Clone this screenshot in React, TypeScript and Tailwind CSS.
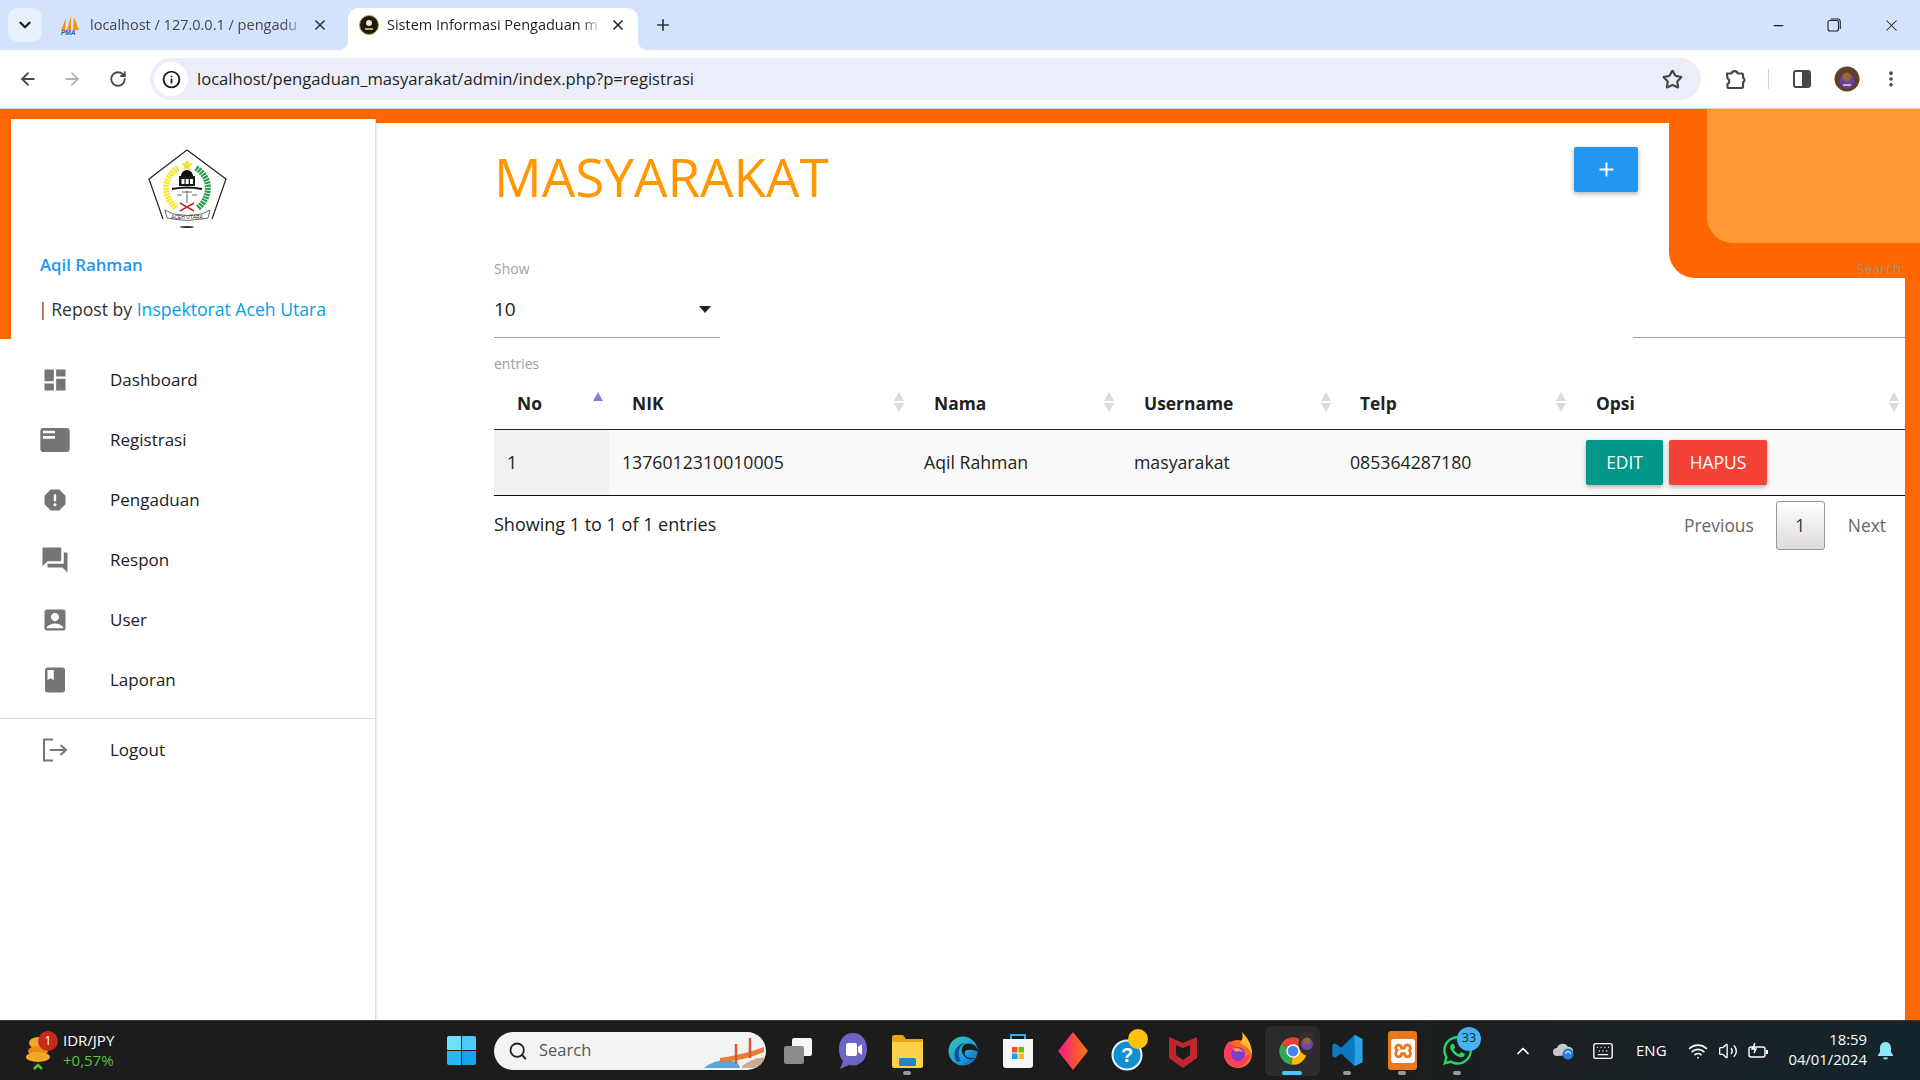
import React from "react";
import { MdDashboard, MdFeaturedPlayList, MdReport, MdForum, MdAccountBox, MdBook } from "react-icons/md";
import { SiXampp } from "react-icons/si";
import { FaWhatsapp } from "react-icons/fa";
import { ArrowLeft, ArrowRight, RotateCw, Star, X, Plus, ChevronDown, ChevronUp, Minus, Info, MoreVertical, Search, Wifi, Volume2, Keyboard } from "lucide-react";

const LogoutIcon = () => (
  <svg width="26" height="24" viewBox="0 0 26 24" fill="none" stroke="#757575" strokeWidth="2">
    <path d="M11 1.5H2v21h9" />
    <path d="M8 12h16M18.5 7l5.5 5-5.5 5" />
  </svg>
);

const menu = [
  { label: "Dashboard", icon: <MdDashboard size={28} color="#757575" /> },
  { label: "Registrasi", icon: <MdFeaturedPlayList size={32} color="#757575" /> },
  { label: "Pengaduan", icon: <MdReport size={28} color="#757575" /> },
  { label: "Respon", icon: <MdForum size={30} color="#757575" /> },
  { label: "User", icon: <MdAccountBox size={28} color="#757575" /> },
  { label: "Laporan", icon: <MdBook size={30} color="#757575" /> },
];

const Logo = () => (
  <svg width="115" height="100" viewBox="0 0 115 100" className="block">
    <path d="M57 10 96 39 82 79M33 79 19 39 57 10" fill="none" stroke="#222" strokeWidth="1.2" />
    <path d="M48 28C33 37 32 56 46 68" fill="none" stroke="#f6e92a" strokeWidth="6" strokeDasharray="2.2 .8" />
    <path d="M66 28C81 37 82 56 68 68" fill="none" stroke="#2f9e4f" strokeWidth="6" strokeDasharray="2.2 .8" />
    <path d="m57 19 1.7 4.2 4.5.2-3.5 2.8 1.2 4.3-3.9-2.5-3.9 2.5 1.2-4.3-3.5-2.8 4.5-.2z" fill="#f4e12b" />
    <path d="M51 36a6 6 0 0 1 12 0z" fill="#111" />
    <rect x="49" y="36" width="16" height="10" fill="#1a1a1a" />
    <rect x="51.5" y="39" width="3" height="5" fill="#fff" />
    <rect x="55.7" y="39" width="3" height="5" fill="#fff" />
    <rect x="60" y="39" width="3" height="5" fill="#fff" />
    <path d="M42 49q15-3 30 0" stroke="#111" strokeWidth="2" fill="none" />
    <path d="M57 51v12M52 52h10M47 55h5M62 55h5" stroke="#666" strokeWidth="1" fill="none" />
    <path d="m50 71 14-8M64 71 50 63" stroke="#c22a2a" strokeWidth="1.5" />
    <path d="m35 70 8 4q14 3 29 0l8-4 -2 8-6 1q-15 3-29 0l-6-1z" fill="#fff" stroke="#444" strokeWidth=".8" />
    <text x="57" y="78.5" textAnchor="middle" fontSize="5" fill="#222" fontFamily="'Liberation Sans',sans-serif">ACEH UTARA</text>
    <ellipse cx="57" cy="87" rx="7" ry="1" fill="#333" />
  </svg>
);

const SortIcon = ({ active }: { active?: boolean }) => (
  <svg width="10" height="24" viewBox="0 0 10 24" className="block">
    <path d="M5 3 10 12H0z" fill={active ? "#7b80dd" : "#dcdcdc"} />
    {!active && <path d="M5 23 10 14H0z" fill="#dcdcdc" />}
  </svg>
);

const cols = [
  { h: "No", w: 115 },
  { h: "NIK", w: 301 },
  { h: "Nama", w: 210 },
  { h: "Username", w: 217 },
  { h: "Telp", w: 235 },
  { h: "Opsi", w: 333 },
];

const TbSlot = ({ children, dot, active }: { children: React.ReactNode; dot?: boolean; active?: boolean }) => (
  <div className={`relative flex h-[50px] w-[55px] items-center justify-center rounded-md ${active ? "bg-[#2b2b2b]" : ""}`}>
    {children}
    {dot && <span className="absolute bottom-[1px] left-[23px] h-[4px] w-[8px] rounded-full bg-[#9a9a9a]" />}
    {active && <span className="absolute bottom-[1px] left-[17px] h-[4px] w-[20px] rounded-full bg-[#4cc2ff]" />}
  </div>
);

const ChromeLogo = ({ size = 30 }: { size?: number }) => (
  <svg width={size} height={size} viewBox="0 0 24 24">
    <path d="M12 12 2.6 6.3A11 11 0 0 1 21.6 6.5z" fill="#ea4335" />
    <path d="M12 12 2.6 6.3A11 11 0 0 0 11 23z" fill="#34a853" />
    <path d="M12 12 21.6 6.5A11 11 0 0 1 11 23z" fill="#fbbc05" />
    <circle cx="12" cy="12" r="5.4" fill="#fff" />
    <circle cx="12" cy="12" r="4.3" fill="#4285f4" />
  </svg>
);

export default function App() {
  return (
    <div className="flex h-screen w-[1920px] flex-col overflow-hidden bg-white font-['Open_Sans',sans-serif] text-[#212121]">
      {/* tab strip */}
      <div className="flex h-[50px] shrink-0 items-end bg-[#d3e3fd] pl-[8px]">
        <div className="mb-[8px] flex h-[34px] w-[34px] items-center justify-center rounded-[10px] bg-[#e8f0fd]">
          <ChevronDown size={18} strokeWidth={3} color="#1f1f1f" />
        </div>
        <div className="flex h-[42px] w-[306px] items-center pb-[8px] pl-[18px]">
          <svg width="20" height="20" viewBox="0 0 20 20" className="shrink-0">
            <path d="M6 3 1 15h4zM11 1 7 15h4zM14 2l-1 13h6z" fill="#f29111" />
            <text x="1" y="20" fontSize="6.5" fontStyle="italic" fontWeight="700" fill="#34558b" fontFamily="'Liberation Sans',sans-serif">PMA</text>
          </svg>
          <span className="ml-[10px] w-[215px] overflow-hidden whitespace-nowrap text-[14.5px] text-[#474747] [mask-image:linear-gradient(90deg,#000_90%,transparent)]">localhost / 127.0.0.1 / pengadu</span>
          <X size={16} strokeWidth={2.5} color="#333" className="ml-[7px]" />
        </div>
        <div className="relative flex h-[42px] w-[290px] items-center rounded-t-[10px] bg-white pb-[8px] pl-[11px]">
          <span className="absolute bottom-0 left-[-10px] h-[10px] w-[10px] bg-[radial-gradient(circle_at_0_0,#d3e3fd_10px,#fff_10.5px)]" />
          <span className="absolute bottom-0 right-[-10px] h-[10px] w-[10px] bg-[radial-gradient(circle_at_100%_0,#d3e3fd_10px,#fff_10.5px)]" />
          <svg width="20" height="20" viewBox="0 0 20 20" className="shrink-0">
            <circle cx="10" cy="10" r="9.5" fill="#1d1a12" stroke="#b89a4a" />
            <circle cx="10" cy="8" r="3" fill="#e8e4d4" />
            <rect x="6" y="13" width="8" height="2" fill="#c8a94e" />
          </svg>
          <span className="ml-[8px] w-[215px] overflow-hidden whitespace-nowrap text-[14.5px] text-[#1f1f1f] [mask-image:linear-gradient(90deg,#000_90%,transparent)]">Sistem Informasi Pengaduan m</span>
          <X size={16} strokeWidth={2.5} color="#222" className="ml-[8px]" />
        </div>
        <div className="mb-[8px] ml-[16px] flex h-[34px] w-[18px] items-center justify-center">
          <Plus size={18} strokeWidth={2.2} color="#333" />
        </div>
        <div className="ml-auto flex h-full items-center">
          <div className="flex w-[56px] justify-center"><Minus size={15} color="#222" /></div>
          <div className="flex w-[56px] justify-center">
            <svg width="14" height="14" viewBox="0 0 14 14" fill="none" stroke="#222" strokeWidth="1.1">
              <rect x="1" y="2.5" width="10.5" height="10.5" rx="2" />
              <path d="M3.5 1h7a3 3 0 0 1 2.8 3v7" />
            </svg>
          </div>
          <div className="flex w-[58px] justify-center"><X size={19} strokeWidth={1.3} color="#222" /></div>
        </div>
      </div>

      {/* toolbar */}
      <div className="flex h-[59px] shrink-0 items-center rounded-t-[10px] border-b border-[#d4d4d4] bg-white pl-[18px]">
        <ArrowLeft size={20} strokeWidth={2.2} color="#474747" />
        <ArrowRight size={20} strokeWidth={2.2} color="#b4b4b4" className="ml-[24px]" />
        <RotateCw size={18} strokeWidth={2.4} color="#474747" className="ml-[27px]" />
        <div className="ml-[23px] flex h-[42px] w-[1551px] items-center rounded-full bg-[#ebeef8] pl-[4px]">
          <div className="flex h-[34px] w-[34px] items-center justify-center rounded-full bg-white">
            <Info size={19} strokeWidth={2.4} color="#1f1f1f" />
          </div>
          <span className="ml-[9px] text-[16.6px] text-[#1f1f1f]">localhost/pengaduan_masyarakat/admin/index.php?p=registrasi</span>
          <Star size={21} strokeWidth={2.5} color="#474747" className="ml-auto mr-[18px]" />
        </div>
        <svg width="23" height="23" viewBox="0 0 23 23" fill="none" stroke="#474747" strokeWidth="2.2" strokeLinejoin="round" className="ml-[23px]">
          <path d="M3 5.500h4.500a3.200 3.200 0 0 1 6.200 0H18a1 1 0 0 1 1 1v3.300a2.400 2.400 0 0 1 0 4.400V19a1 1 0 0 1-1 1H4.500a1 1 0 0 1-1-1v-3a3 3 0 0 0 0-5.500z" />
        </svg>
        <span className="ml-[21px] h-[20px] w-[1px] bg-[#c4d5f3]" />
        <div className="ml-[24px] flex h-[18px] w-[18px] overflow-hidden rounded-[3px] border-2 border-[#474747]">
          <span className="w-1/2" />
          <span className="w-1/2 bg-[#474747]" />
        </div>
        <svg width="26" height="26" viewBox="0 0 26 26" className="ml-[23px]">
          <circle cx="13" cy="13" r="12.5" fill="#5d3f2a" />
          <circle cx="13" cy="15" r="7.5" fill="#6b3fa8" />
          <circle cx="13" cy="11" r="4.5" fill="#94683e" />
          <path d="M9 19h8" stroke="#ddd" strokeWidth="1.5" />
        </svg>
        <MoreVertical size={20} strokeWidth={2.4} color="#474747" className="ml-[21px]" />
      </div>

      {/* page */}
      <div className="relative flex min-h-0 flex-1 bg-white">
        <div className="absolute left-0 top-0 h-[14px] w-full bg-[#ff6600]" />
        <div className="absolute left-0 top-0 z-20 h-[230px] w-[11px] bg-[#ff6600]" />
        <div className="absolute right-0 top-0 h-[169px] w-[251px] rounded-bl-[26px] bg-[#ff6600]" />
        <div className="absolute right-0 top-0 h-[134px] w-[213px] rounded-bl-[26px] bg-[#ff9933]" />
        <div className="absolute bottom-0 right-0 top-[169px] w-[15px] bg-[#ff6600]" />

        <aside className="relative z-10 mt-[10px] flex w-[376px] shrink-0 flex-col border-r border-[#e0e0e0] bg-white shadow-[1px_0_3px_rgba(0,0,0,0.1)]">
          <div className="mt-[21px] flex justify-center"><Logo /></div>
          <div className="ml-[40px] mt-[13px] text-[16.8px] font-semibold leading-[24px] text-[#2196f3]">Aqil Rahman</div>
          <div className="ml-[40px] mt-[20px] flex text-[17.6px] leading-[24px] text-[#333]">
            <span className="ml-[-2px] mr-[-2px] text-[#444]">|</span>
            <span className="ml-[1px] whitespace-pre"> Repost by <span className="text-[#03a0ec]">Inspektorat Aceh Utara</span></span>
          </div>
          <nav className="mt-[29px]">
            {menu.map((m) => (
              <div key={m.label} className="flex h-[60px] items-center">
                <div className="flex w-[110px] justify-center"><span className="flex w-[32px] justify-center">{m.icon}</span></div>
                <span className="text-[17px]">{m.label}</span>
              </div>
            ))}
          </nav>
          <div className="mt-[8px] border-t border-[#e0e0e0] pt-[1px]">
            <div className="flex h-[60px] items-center">
              <div className="flex w-[110px] justify-center"><LogoutIcon /></div>
              <span className="text-[17px]">Logout</span>
            </div>
          </div>
        </aside>

        <main className="relative z-10 min-w-0 flex-1 pl-[118px] pr-[15px]">
          <div className="flex h-[150px] items-start justify-between pr-[267px] pt-[38px]">
            <h1 className="-mt-[2px] text-[53px] font-normal leading-[64px] text-[#ff9800]">MASYARAKAT</h1>
            <button className="flex h-[45px] w-[64px] items-center justify-center rounded-[2px] bg-[#2196f3] shadow-[0_2px_5px_rgba(0,0,0,0.3)]">
              <Plus size={21} strokeWidth={2.2} color="#fff" />
            </button>
          </div>

          <div className="flex items-start justify-between">
            <div>
              <div className="text-[14px] leading-[20px] text-[#9e9e9e]">Show</div>
              <div className="mt-[13px] flex h-[46px] w-[226px] items-center justify-between border-b border-[#9e9e9e] pb-[10px] pr-[9px]">
                <span className="text-[19px]">10</span>
                <span className="h-0 w-0 border-x-[6px] border-t-[7px] border-x-transparent border-t-[#212121]" />
              </div>
            </div>
            <div className="flex w-[272px] flex-col items-end">
              <div className="text-[14px] leading-[20px] text-[#a8927c]">Search:</div>
              <div className="mt-[13px] h-[46px] w-full border-b border-[#9e9e9e]" />
            </div>
          </div>

          <div className="mt-[16px] text-[14px] leading-[20px] text-[#9e9e9e]">entries</div>

          <table className="w-[1411px] table-fixed border-collapse">
            <colgroup>
              {cols.map((c) => <col key={c.h} style={{ width: c.w }} />)}
            </colgroup>
            <thead>
              <tr className="h-[55px] border-b border-[#222]">
                {cols.map((c, i) => (
                  <th key={c.h} className="relative pl-[23px] pt-[3px] text-left align-middle text-[17.4px] font-bold text-[#212121]">
                    <span className={i === 2 || i === 3 || i === 5 ? "ml-[1px]" : ""}>{c.h}</span>
                    <span className="absolute right-[6px] top-[15px]"><SortIcon active={i === 0} /></span>
                  </th>
                ))}
              </tr>
            </thead>
            <tbody>
              <tr className="h-[66px] border-b border-[#111] bg-[#f9f9f9] text-[17.7px]">
                <td className="bg-[#f1f1f1] pl-[13px] pt-[1px]">1</td>
                <td className="pl-[13px] pt-[1px]">1376012310010005</td>
                <td className="pl-[14px] pt-[1px]">Aqil Rahman</td>
                <td className="pl-[14px] pt-[1px]">masyarakat</td>
                <td className="pl-[13px] pt-[1px]">085364287180</td>
                <td className="pl-[14px]">
                  <div className="flex gap-[6px]">
                    <button className="h-[45px] w-[77px] rounded-[2px] bg-[#009688] text-[17.4px] text-white shadow-[0_2px_4px_rgba(0,0,0,0.3)]">EDIT</button>
                    <button className="h-[45px] w-[98px] rounded-[2px] bg-[#f44336] text-[17.4px] text-white shadow-[0_2px_4px_rgba(0,0,0,0.3)]">HAPUS</button>
                  </div>
                </td>
              </tr>
            </tbody>
          </table>

          <div className="mt-[5px] flex items-start justify-between">
            <div className="mt-[11px] text-[18px] leading-[24px]">Showing 1 to 1 of 1 entries</div>
            <div className="flex h-[49px] items-center text-[17.4px] text-[#666]">
              <span>Previous</span>
              <span className="ml-[22px] flex h-[49px] w-[49px] items-center justify-center rounded-[3px] border border-[#979797] bg-gradient-to-b from-white to-[#dcdcdc] text-[#333]">1</span>
              <span className="ml-[23px] mr-[19px]">Next</span>
            </div>
          </div>
        </main>
      </div>

      {/* taskbar */}
      <div className="flex h-[60px] shrink-0 items-center border-t border-[#3a3a3a] bg-gradient-to-r from-[#1c1c1c] from-70% to-[#15252d] text-white">
        <div className="flex w-[447px] items-center pl-[25px]">
          <div className="relative h-[38px] w-[38px]">
            <svg width="28" height="38" viewBox="0 0 28 38">
              <ellipse cx="13" cy="11" rx="9" ry="6" fill="#f5a623" />
              <ellipse cx="13" cy="19" rx="10" ry="5" fill="#e98b15" />
              <ellipse cx="13" cy="25" rx="12" ry="5" fill="#f7a527" />
              <path d="m9 37 4-4 4 4" stroke="#5bc236" strokeWidth="2.6" fill="none" />
            </svg>
            <span className="absolute left-[13px] top-[-1px] flex h-[20px] w-[20px] items-center justify-center rounded-full bg-[#c42b1c] text-[12px] leading-none">1</span>
          </div>
          <div className="-mt-[2px] flex flex-col">
            <span className="text-[15px] leading-[20px]">IDR/JPY</span>
            <span className="text-[15px] leading-[20px] text-[#5bc236]">+0,57%</span>
          </div>
        </div>
        <div className="grid h-[29px] w-[29px] grid-cols-2 gap-[1px]">
          <span className="rounded-tl-[2px] bg-[#6fe0fb]" />
          <span className="rounded-tr-[2px] bg-[#49cdf7]" />
          <span className="rounded-bl-[2px] bg-[#28b8f5]" />
          <span className="rounded-br-[2px] bg-[#1aa3ee]" />
        </div>
        <div className="ml-[18px] flex h-[38px] w-[272px] items-center overflow-hidden rounded-full bg-[#f3f3f3] pl-[14px]">
          <Search size={20} strokeWidth={2.2} color="#222" />
          <span className="ml-[11px] text-[16.5px] text-[#555]">Search</span>
          <svg width="64" height="38" viewBox="0 0 64 38" className="ml-auto">
            <path d="M2 36q10-8 22-8t14 8z" fill="#58a6dc" />
            <path d="M18 26q22-3 44-11v5q-20 9-44 10z" fill="#ed7b3a" />
            <path d="M34 12v20M48 6v20" stroke="#d9582b" strokeWidth="2.5" />
            <path d="M40 34q10-8 24-9v11H40z" fill="#c9ad92" />
          </svg>
        </div>
        <div className="ml-[4px] flex items-center">
          <TbSlot>
            <svg width="30" height="30" viewBox="0 0 30 30">
              <rect x="9" y="2" width="20" height="18" rx="2" fill="#f5f5f5" />
              <rect x="1" y="10" width="20" height="18" rx="2" fill="#8a8a8a" />
            </svg>
          </TbSlot>
          <TbSlot>
            <svg width="30" height="38" viewBox="0 0 30 38">
              <path d="M15 1C6 1 1 8 1 17c0 5 1 9 4 12l-3 8 9-4c1 .3 3 .5 4 .5 9 0 14-8 14-16.500S24 1 15 1z" fill="#6c65c1" />
              <rect x="8" y="11" width="11" height="13" rx="2" fill="#fff" />
              <path d="m20 15 4-3v11l-4-3z" fill="#fff" />
            </svg>
          </TbSlot>
          <TbSlot dot>
            <svg width="31" height="34" viewBox="0 0 31 34">
              <path d="M0 3q0-2 2-2h9l3 4h17v6H0z" fill="#e6a417" />
              <path d="M0 8h31v24a2 2 0 0 1-2 2H2a2 2 0 0 1-2-2z" fill="#fdd24b" />
              <rect x="7" y="24" width="17" height="8" rx="1.500" fill="#1a86d0" />
            </svg>
          </TbSlot>
          <TbSlot>
            <svg width="30" height="34" viewBox="0 0 30 34">
              <defs>
                <linearGradient id="ed" x1="0" y1="0" x2="1" y2="1">
                  <stop offset="0" stopColor="#36c7a6" />
                  <stop offset=".6" stopColor="#1d9de0" />
                  <stop offset="1" stopColor="#0c5aa8" />
                </linearGradient>
              </defs>
              <circle cx="15" cy="17" r="14.500" fill="url(#ed)" />
              <path d="M29.500 17c-.5-6-6.500-9-12-7-4 2-5 7-2 11 2 3 7 6 11 3l-3 0c-4 0-7-2-7-5s4-4 8-3c2 .5 4 1 5 1z" fill="#1c1c1c" />
              <path d="M9 28c-5-7-2-18 8-19-7 3-8 12-4 18z" fill="#0d4f95" />
            </svg>
          </TbSlot>
          <TbSlot>
            <svg width="30" height="36" viewBox="0 0 30 36">
              <path d="M8 7V2h14v5" fill="none" stroke="#2ab2ea" strokeWidth="2" />
              <path d="M0 6h30v26a3 3 0 0 1-3 3H3a3 3 0 0 1-3-3z" fill="#f6f6f6" />
              <rect x="9" y="14" width="5.500" height="5.500" fill="#f25022" />
              <rect x="15.500" y="14" width="5.500" height="5.500" fill="#7fba00" />
              <rect x="9" y="20.500" width="5.500" height="5.500" fill="#00a4ef" />
              <rect x="15.500" y="20.500" width="5.500" height="5.500" fill="#ffb900" />
            </svg>
          </TbSlot>
          <TbSlot>
            <svg width="30" height="38" viewBox="0 0 30 38">
              <defs>
                <linearGradient id="dm" x1="0" y1="0" x2="1" y2="0">
                  <stop offset="0" stopColor="#f2188f" />
                  <stop offset="1" stopColor="#fb7a00" />
                </linearGradient>
              </defs>
              <path d="M15 0 30 19 15 38 0 19z" fill="url(#dm)" />
            </svg>
          </TbSlot>
          <TbSlot>
            <svg width="38" height="46" viewBox="0 0 38 46" className="ml-[4px]">
              <circle cx="16" cy="27" r="14.500" fill="#0f8fd0" stroke="#e8f6ff" strokeWidth="2" />
              <text x="16" y="34" textAnchor="middle" fontSize="20" fontWeight="700" fill="#fff" fontFamily="'Liberation Sans',sans-serif">?</text>
              <circle cx="27" cy="11" r="10" fill="#ffc10e" />
            </svg>
          </TbSlot>
          <TbSlot>
            <svg width="28" height="34" viewBox="0 0 28 34">
              <path d="M0 3 14 9 28 3v21L14 34 0 24z" fill="#c0272d" />
              <path d="M7 11l7 3 7-3v10l-7 5-7-5z" fill="#1c1c1c" />
            </svg>
          </TbSlot>
          <TbSlot>
            <svg width="30" height="38" viewBox="0 0 30 38">
              <circle cx="15" cy="22" r="14" fill="#ff6a2b" />
              <path d="M19 0c5 5 10 12 10 22-4-8-9-9-12-11 3-3 3-7 2-11z" fill="#ffbd2e" />
              <path d="M1 22C1 14 5 10 7 9c0 4 3 5 6 5-3 8 6 14 14 8-2 9-9 14-15 13C6 33 1 28 1 22z" fill="#ff3d5a" />
              <circle cx="15" cy="22" r="7" fill="#7b3fd1" />
              <path d="M10 17c3-2 8-1 10 3-3-1-6-1-7 0z" fill="#ff9a3d" />
            </svg>
          </TbSlot>
          <TbSlot active>
            <ChromeLogo size={30} />
            <svg width="18" height="26" viewBox="0 0 18 26" className="absolute right-[4px] top-[4px]">
              <ellipse cx="9" cy="13" rx="8.500" ry="12.500" fill="#3a2c28" />
              <circle cx="9" cy="14" r="6" fill="#6b4aa8" />
              <circle cx="9" cy="11" r="3.500" fill="#94683e" />
            </svg>
          </TbSlot>
          <TbSlot dot>
            <svg width="31" height="31" viewBox="0 0 24 24">
              <path d="M17.500 0 23.500 3v18l-6 3L7 14l-4.500 3.500L.5 16.500v-9L2.500 6.500 7 10zM17.500 6.500 11.500 12l6 5.500z" fill="#1c9cea" />
              <path d="M17.500 0 7 10 2.500 6.500.5 7.500v9l2 1L7 14l10.500 10z" fill="#0a78c4" />
              <path d="M17.500 0 23.500 3v18l-6 3z" fill="#27a5ec" />
            </svg>
          </TbSlot>
          <TbSlot dot>
            <div className="flex h-[39px] w-[29px] items-center justify-center rounded-[3px] bg-[#e8791f]">
              <SiXampp size={24} color="#fff" />
            </div>
          </TbSlot>
          <TbSlot dot>
            <FaWhatsapp size={33} color="#25d366" />
            <span className="absolute right-[4px] top-[1px] flex h-[24px] w-[24px] items-center justify-center rounded-full bg-[#43b3f4] text-[12.5px] text-[#15232c]">33</span>
          </TbSlot>
        </div>
        <div className="ml-[23px] flex items-center">
          <div className="flex w-[30px] justify-center"><ChevronUp size={20} strokeWidth={2} color="#fff" /></div>
          <div className="ml-[14px] w-[30px]">
            <svg width="22" height="18" viewBox="0 0 22 18">
              <path d="M5 14a4 4 0 0 1 0-8 6 6 0 0 1 11-1 4 4 0 0 1 2 8z" fill="#c8c8c8" />
              <circle cx="16" cy="12" r="5.500" fill="#2e7fd8" />
              <path d="M13.500 12a2.500 2.500 0 0 1 5 0" stroke="#fff" fill="none" />
            </svg>
          </div>
          <div className="ml-[9px] flex w-[24px] justify-center"><Keyboard size={22} strokeWidth={1.5} color="#fff" /></div>
          <span className="ml-[21px] w-[38px] text-[15px]">ENG</span>
          <div className="ml-[12px] flex w-[24px] justify-center"><Wifi size={20} strokeWidth={2} color="#fff" /></div>
          <div className="ml-[6px] flex w-[24px] justify-center"><Volume2 size={20} strokeWidth={1.6} color="#fff" /></div>
          <div className="ml-[6px] flex w-[24px] justify-center">
            <svg width="22" height="18" viewBox="0 0 22 18" fill="none" stroke="#fff" strokeWidth="1.4">
              <rect x="2" y="5" width="16" height="10" rx="2" />
              <path d="M20 8v4" strokeWidth="2" />
              <path d="M8 1 5 7h4l-2 4" fill="#fff" />
            </svg>
          </div>
          <div className="-mt-[3px] ml-[7px] flex w-[90px] flex-col items-end text-[14.8px] leading-[20px]">
            <span>18:59</span>
            <span>04/01/2024</span>
          </div>
          <div className="ml-[8px] flex w-[20px] justify-center">
            <svg width="17" height="18" viewBox="0 0 17 18">
              <path d="M8.500 0C5 0 3 3 3 6v4l-2 3v1h15v-1l-2-3V6c0-3-2-6-5.500-6z" fill="#8fe6fb" />
              <path d="M6 15.500h5a2.500 2 0 0 1-5 0z" fill="#8fe6fb" />
            </svg>
          </div>
        </div>
      </div>
    </div>
  );
}
